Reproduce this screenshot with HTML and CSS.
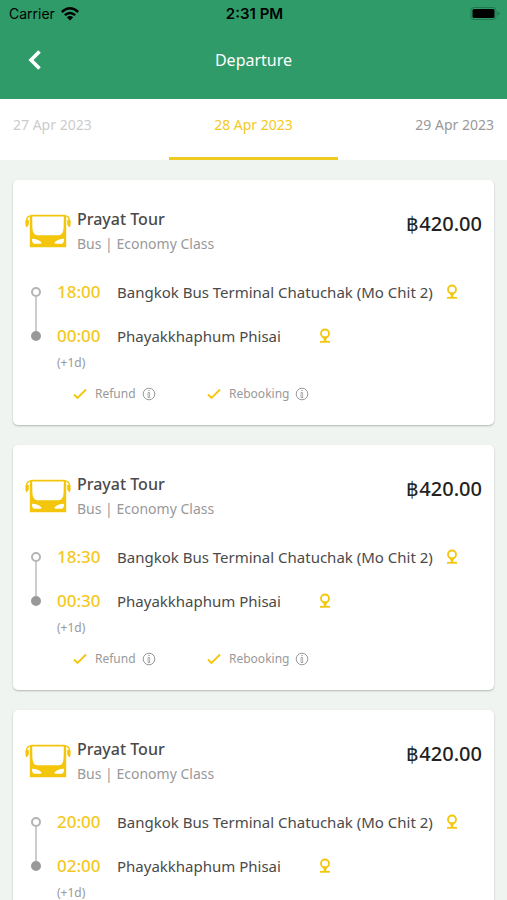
FILE: index.html
```html
<!DOCTYPE html>
<html lang="en">
<head>
<meta charset="utf-8">
<meta name="viewport" content="width=device-width, initial-scale=1">
<title>Departure</title>
<link rel="stylesheet" href="styles.css">
</head>
<body>
<svg class="sprite" aria-hidden="true">
  <symbol id="bus" viewBox="0 0 46 34">
    <path fill="currentColor" fill-rule="evenodd" d="M7 .8h32q2.200 0 2.200 2.200v30.200H4.800V3Q4.800 .8 7 .8zM7.200 2.600L7.400 14q.4 7.300 5 7.300h21.200q4.600 0 5-7.300l.2-11.400zM7 24.800q0 5 2.500 5h5.500q2.400-.2 1-1.800Q13.500 25 7 24.800zM39 24.800q0 5-2.500 5h-5.500q-2.400-.2-1-1.800 2.500-3 9-3.200z"/>
    <path fill="none" stroke="currentColor" stroke-width="1.400" d="M7 1.600Q1.500 1.600 1.500 7M39 1.600q5.500 0 5.500 5.400"/>
    <path fill="currentColor" d="M.4 6.200Q2 5.200 3.800 6v4.500L1.800 13.500Q.4 13 .4 10zM45.600 6.200Q44 5.200 42.200 6v4.500l2 3q1.400-.5 1.400-3.500z"/>
  </symbol>
  <symbol id="pin" viewBox="0 0 12 16">
    <circle cx="6" cy="5.500" r="4" fill="none" stroke="currentColor" stroke-width="1.800"/>
    <path d="M3 8.500h6L7.200 11.500V13H4.800v-1.500z" fill="currentColor"/>
    <path d="M1 13.800h10" stroke="currentColor" stroke-width="1.800"/>
  </symbol>
  <symbol id="check" viewBox="0 0 14 12">
    <path d="M1 6.500l3.500 3.500L13 1.500" fill="none" stroke="currentColor" stroke-width="1.800"/>
  </symbol>
  <symbol id="info" viewBox="0 0 14 14">
    <circle cx="7" cy="7" r="5.800" fill="none" stroke="currentColor"/>
    <path d="M6 5.500h1.600V10.500M6 10.500V5.500M6 10.500h2.200M6.200 3.500h1.600" fill="none" stroke="currentColor" stroke-width=".8"/>
  </symbol>
</svg>
<div class="app">
  <header class="top">
    <div class="status">
      <span class="carrier">Carrier
        <svg width="18" height="14" viewBox="0 0 18 14" aria-hidden="true"><g fill="none" stroke="#000" stroke-width="2.400"><path d="M.8 5q8.200-7.400 16.400 0M3.800 8.200q5.200-4.600 10.400 0"/></g><path d="M5.800 10.200q3.200-2.600 6.400 0L9 13.500z"/></svg>
      </span>
      <span class="clock">2:31 PM</span>
      <svg class="battery" width="30" height="14" viewBox="0 0 30 14" aria-hidden="true"><rect x="1" y=".5" width="25" height="12" rx="3" fill="none" stroke="#1f7a4f"/><rect x="2.500" y="2" width="22" height="9" rx="1.500"/><path d="M27.500 4.500q2 .5 2 2t-2 2z" fill="#1f7a4f"/></svg>
    </div>
    <div class="bar">
      <button class="back" type="button" aria-label="Back"><svg width="14" height="20" viewBox="0 0 14 20"><path d="M11.500 1.500L3 10l8.500 8.500" fill="none" stroke="#fff" stroke-width="3.600"/></svg></button>
      <h1>Departure</h1>
    </div>
  </header>
  <nav class="dates">
    <button class="date past" type="button">27 Apr 2023</button>
    <button class="date current" type="button">28 Apr 2023</button>
    <button class="date next" type="button">29 Apr 2023</button>
  </nav>
  <main class="trips">
    <article class="card">
      <div class="head">
        <svg class="bus"><use href="#bus"/></svg>
        <div class="operator"><h2>Prayat Tour</h2><p>Bus | Economy Class</p></div>
        <strong class="price">฿420.00</strong>
      </div>
      <ol class="route">
        <li class="stop from"><i class="dot"></i><time>18:00</time><span class="place">Bangkok Bus Terminal Chatuchak (Mo Chit 2)</span><button class="pin near" type="button" aria-label="Show on map"><svg><use href="#pin"/></svg></button></li>
        <li class="stop to"><i class="dot"></i><time>00:00</time><span class="place">Phayakkhaphum Phisai</span><button class="pin far" type="button" aria-label="Show on map"><svg><use href="#pin"/></svg></button></li>
      </ol>
      <p class="days">(+1d)</p>
      <div class="perks">
        <div class="perk"><svg class="check"><use href="#check"/></svg><span>Refund</span><button class="info" type="button" aria-label="Refund details"><svg><use href="#info"/></svg></button></div>
        <div class="perk"><svg class="check"><use href="#check"/></svg><span>Rebooking</span><button class="info" type="button" aria-label="Rebooking details"><svg><use href="#info"/></svg></button></div>
      </div>
    </article>
    <article class="card">
      <div class="head">
        <svg class="bus"><use href="#bus"/></svg>
        <div class="operator"><h2>Prayat Tour</h2><p>Bus | Economy Class</p></div>
        <strong class="price">฿420.00</strong>
      </div>
      <ol class="route">
        <li class="stop from"><i class="dot"></i><time>18:30</time><span class="place">Bangkok Bus Terminal Chatuchak (Mo Chit 2)</span><button class="pin near" type="button" aria-label="Show on map"><svg><use href="#pin"/></svg></button></li>
        <li class="stop to"><i class="dot"></i><time>00:30</time><span class="place">Phayakkhaphum Phisai</span><button class="pin far" type="button" aria-label="Show on map"><svg><use href="#pin"/></svg></button></li>
      </ol>
      <p class="days">(+1d)</p>
      <div class="perks">
        <div class="perk"><svg class="check"><use href="#check"/></svg><span>Refund</span><button class="info" type="button" aria-label="Refund details"><svg><use href="#info"/></svg></button></div>
        <div class="perk"><svg class="check"><use href="#check"/></svg><span>Rebooking</span><button class="info" type="button" aria-label="Rebooking details"><svg><use href="#info"/></svg></button></div>
      </div>
    </article>
    <article class="card">
      <div class="head">
        <svg class="bus"><use href="#bus"/></svg>
        <div class="operator"><h2>Prayat Tour</h2><p>Bus | Economy Class</p></div>
        <strong class="price">฿420.00</strong>
      </div>
      <ol class="route">
        <li class="stop from"><i class="dot"></i><time>20:00</time><span class="place">Bangkok Bus Terminal Chatuchak (Mo Chit 2)</span><button class="pin near" type="button" aria-label="Show on map"><svg><use href="#pin"/></svg></button></li>
        <li class="stop to"><i class="dot"></i><time>02:00</time><span class="place">Phayakkhaphum Phisai</span><button class="pin far" type="button" aria-label="Show on map"><svg><use href="#pin"/></svg></button></li>
      </ol>
      <p class="days">(+1d)</p>
    </article>
  </main>
</div>
</body>
</html>
```
FILE: styles.css
```css
* { box-sizing: border-box; margin: 0; padding: 0; }
body {
  font-family: "Noto Sans", "Open Sans", sans-serif;
  background: #eff4f1;
  color: #4a4a4a;
}
button { font: inherit; color: inherit; background: none; border: 0; cursor: pointer; }
svg { display: block; }
ol { list-style: none; }
.sprite { position: absolute; width: 0; height: 0; }

.app { display: flex; flex-direction: column; height: 100vh; }

.top { background: #2f9b68; flex: none; }
.status {
  display: grid;
  grid-template-columns: 1fr auto 1fr;
  align-items: center;
  height: 28px;
  padding: 0 7px 0 9px;
  font: 14px/20px Inter, sans-serif;
  color: #000;
}
.carrier { display: flex; align-items: center; gap: 6px; }
.clock { font-size: 15px; font-weight: 600; }
.battery { justify-self: end; }
.bar {
  display: grid;
  grid-template-columns: 1fr auto 1fr;
  align-items: center;
  height: 71px;
  padding: 0 28px 7px;
  color: #fff;
}
.bar h1 { font-size: 16px; line-height: 24px; font-weight: 400; }
.back { justify-self: start; }

.dates {
  flex: none;
  display: grid;
  grid-template-columns: repeat(3, 1fr);
  height: 61px;
  background: #fff;
}
.date {
  padding: 0 13px 6px;
  font-size: 14px;
  line-height: 20px;
  border-bottom: 3px solid transparent;
}
.past { text-align: left; color: #ccc; }
.current { color: #f3c91f; border-color: #efcb22; }
.next { text-align: right; color: #999; }

.trips {
  flex: 1;
  min-height: 0;
  overflow-y: auto;
  scrollbar-width: none;
  padding: 20px 13px;
}
.card {
  background: #fff;
  border-radius: 5px;
  box-shadow: 0 1px 2px rgba(0, 0, 0, .25);
  padding: 27px 12px 22px;
  margin-bottom: 20px;
}
.head { display: flex; align-items: flex-start; gap: 6px; height: 63px; }
.bus { width: 46px; height: 34px; margin-top: 7px; color: #f3c60c; flex: none; }
.operator { flex: 1; }
.operator h2 { font-size: 16px; line-height: 25px; font-weight: 500; }
.operator p { font-size: 14px; line-height: 24px; color: #999; }
.price { font-size: 20px; line-height: 34px; font-weight: 500; color: #222; }

.stop {
  display: grid;
  grid-template-columns: 22px 60px auto auto;
  justify-content: start;
  align-items: center;
  height: 44px;
  font-size: 15px;
  line-height: 22px;
}
.stop time { padding-left: 10px; font-size: 17px; font-weight: 500; color: #f3c91f; }
.dot {
  position: relative;
  justify-self: center;
  width: 10px;
  height: 10px;
  border: 2px solid #b4b4b4;
  border-radius: 50%;
}
.to .dot { background: #999; border-color: #999; }
.from .dot::after {
  content: "";
  position: absolute;
  left: 2px;
  top: 8px;
  width: 2px;
  height: 34px;
  background: #ccc;
}
.place { padding-left: 10px; }
.pin { color: #f3c60c; }
.pin svg { width: 12px; height: 16px; }
.near { margin-left: 13px; }
.far { margin-left: 38px; }

.days { padding-left: 32px; font-size: 12px; line-height: 18px; margin-top: -4px; color: #999; }
.perks { display: flex; margin-top: 13px; padding-left: 48px; }
.perk {
  display: flex;
  align-items: center;
  flex: 0 0 134px;
  font-size: 12px;
  line-height: 18px;
  color: #999;
}
.check { width: 14px; height: 12px; margin-right: 8px; color: #f3c60c; }
.info { margin-left: 6px; }
.info svg { width: 14px; height: 14px; }
```
